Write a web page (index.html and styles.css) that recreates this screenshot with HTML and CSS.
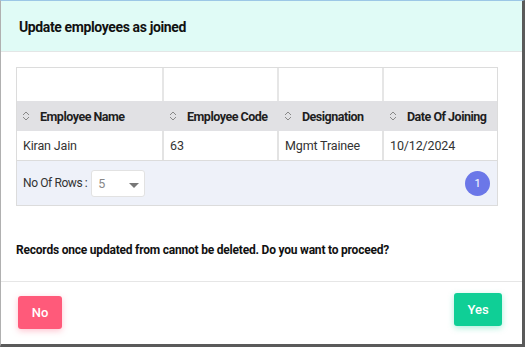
FILE: index.html
```html
<!DOCTYPE html>
<html>
<head>
<meta charset="utf-8">
<link rel="stylesheet" href="styles.css">
</head>
<body>
<div class="modal">
  <div class="modal-header">Update employees as joined</div>
  <div class="modal-body">
    <div class="grid">
      <div class="row filter-row">
        <div class="cell c1"></div><div class="cell c2"></div><div class="cell c3"></div><div class="cell c4"></div>
      </div>
      <div class="row head-row">
        <div class="cell c1"><span class="sort"><svg width="8" height="12" viewBox="0 0 8 12"><path d="M1 5 L4 2 L7 5 M1 7 L4 10 L7 7" fill="none" stroke="#888" stroke-width="1"/></svg></span>Employee Name</div>
        <div class="cell c2"><span class="sort"><svg width="8" height="12" viewBox="0 0 8 12"><path d="M1 5 L4 2 L7 5 M1 7 L4 10 L7 7" fill="none" stroke="#888" stroke-width="1"/></svg></span>Employee Code</div>
        <div class="cell c3"><span class="sort"><svg width="8" height="12" viewBox="0 0 8 12"><path d="M1 5 L4 2 L7 5 M1 7 L4 10 L7 7" fill="none" stroke="#888" stroke-width="1"/></svg></span>Designation</div>
        <div class="cell c4"><span class="sort"><svg width="8" height="12" viewBox="0 0 8 12"><path d="M1 5 L4 2 L7 5 M1 7 L4 10 L7 7" fill="none" stroke="#888" stroke-width="1"/></svg></span>Date Of Joining</div>
      </div>
      <div class="row data-row">
        <div class="cell c1">Kiran Jain</div>
        <div class="cell c2">63</div>
        <div class="cell c3">Mgmt Trainee</div>
        <div class="cell c4">10/12/2024</div>
      </div>
      <div class="pager">
        <div class="rows-label">No Of Rows :</div>
        <div class="select"><span>5</span><svg width="10" height="6" viewBox="0 0 10 6"><path d="M0 0 L10 0 L5 5 Z" fill="#777"/></svg></div>
        <div class="spacer"></div>
        <div class="page">1</div>
      </div>
    </div>
    <p class="message">Records once updated from cannot be deleted. Do you want to proceed?</p>
  </div>
  <div class="modal-footer">
    <button class="btn no">No</button>
    <button class="btn yes">Yes</button>
  </div>
</div>
</body>
</html>
```
FILE: styles.css
```css
* { box-sizing: border-box; }
html, body { margin: 0; padding: 0; }
body {
  width: 525px;
  height: 347px;
  font-family: Roboto, "Noto Sans", Arial, sans-serif;
  color: #212121;
  background: #fff;
  overflow: hidden;
}
.modal {
  width: 525px;
  height: 347px;
  border-top: 1px solid #9cc7e6;
  border-left: 1px solid #b0b0b0;
  border-right: 3px solid #5a5a5a;
  border-bottom: 3px solid #5a5a5a;
  display: flex;
  flex-direction: column;
  background: #fff;
}
.modal-header {
  height: 51px;
  flex: none;
  background: #e0fbf6;
  border-bottom: 1px solid #e3e6e6;
  padding: 1px 0 0 18px;
  display: flex;
  align-items: center;
  font-size: 14px;
  letter-spacing: -0.38px;
  font-weight: 700;
  color: #111;
}
.modal-body {
  padding: 15px 24px 0 15px;
  flex: 1;
}
.grid {
  border: 1px solid #dcdcdc;
  width: 482px;
}
.row { display: flex; }
.cell {
  border-right: 2px solid #e3e3e3;
  display: flex;
  align-items: center;
  font-size: 12.5px;
  letter-spacing: -0.15px;
  padding-left: 6px;
}
.cell.c4 { border-right: none; }
.c1 { width: 147px; }
.c2 { width: 115px; }
.c3 { width: 105px; }
.c4 { flex: 1; }
.filter-row { height: 33px; background: #fff; }
.filter-row .cell { border-right-color: #e6e6e6; }
.head-row {
  height: 30px;
  background: #e1e1e4;
}
.head-row .cell {
  border-right: none;
  font-weight: 700;
  color: #1e1e1e;
  padding-left: 5px;
  font-size: 12.5px;
  letter-spacing: -0.5px;
}
.sort { display: inline-flex; width: 18px; }
.data-row {
  height: 30px;
  background: #fff;
  border-bottom: 1px solid #dcdcdc;
}
.data-row .cell { color: #333; }
.pager {
  height: 44px;
  background: #eef1f9;
  display: flex;
  align-items: center;
  padding: 0 6px 0 6px;
  font-size: 12px;
  letter-spacing: -0.4px;
}
.rows-label { color: #333; margin-right: 4px; }
.select {
  width: 54px;
  height: 27px;
  background: #fff;
  border: 1px solid #e2e2e2;
  border-radius: 3px;
  display: flex;
  align-items: center;
  justify-content: space-between;
  padding: 0 5px 0 6px;
  color: #888;
  font-size: 12.5px;
  margin-top: 1px;
}
.select svg { margin-top: 4px; }
.spacer { flex: 1; }
.page {
  width: 25px;
  height: 25px;
  border-radius: 50%;
  background: #6b77e8;
  color: #fff;
  font-size: 11px;
  letter-spacing: 0;
  display: flex;
  align-items: center;
  justify-content: center;
  margin-right: 1px;
}
.message {
  margin: 37px 0 0 0;
  font-size: 12px;
  letter-spacing: -0.21px;
  font-weight: 700;
  color: #111;
}
.modal-footer {
  height: 63px;
  flex: none;
  border-top: 1px solid #e6e6e6;
  display: flex;
  justify-content: space-between;
  align-items: flex-start;
  padding: 0 20px 0 17px;
}
.btn {
  border: none;
  border-radius: 3px;
  color: #fff;
  font-family: Roboto, Arial, sans-serif;
  font-size: 13px;
  font-weight: 500;
}
.no {
  width: 44px;
  height: 33px;
  margin-top: 14px;
  background: #ff5a7a;
  box-shadow: 0 2px 6px rgba(255, 90, 122, 0.35);
}
.yes {
  width: 48px;
  height: 33px;
  margin-top: 11px;
  background: #0fcf96;
  box-shadow: 0 2px 6px rgba(15, 207, 150, 0.35);
}
```
